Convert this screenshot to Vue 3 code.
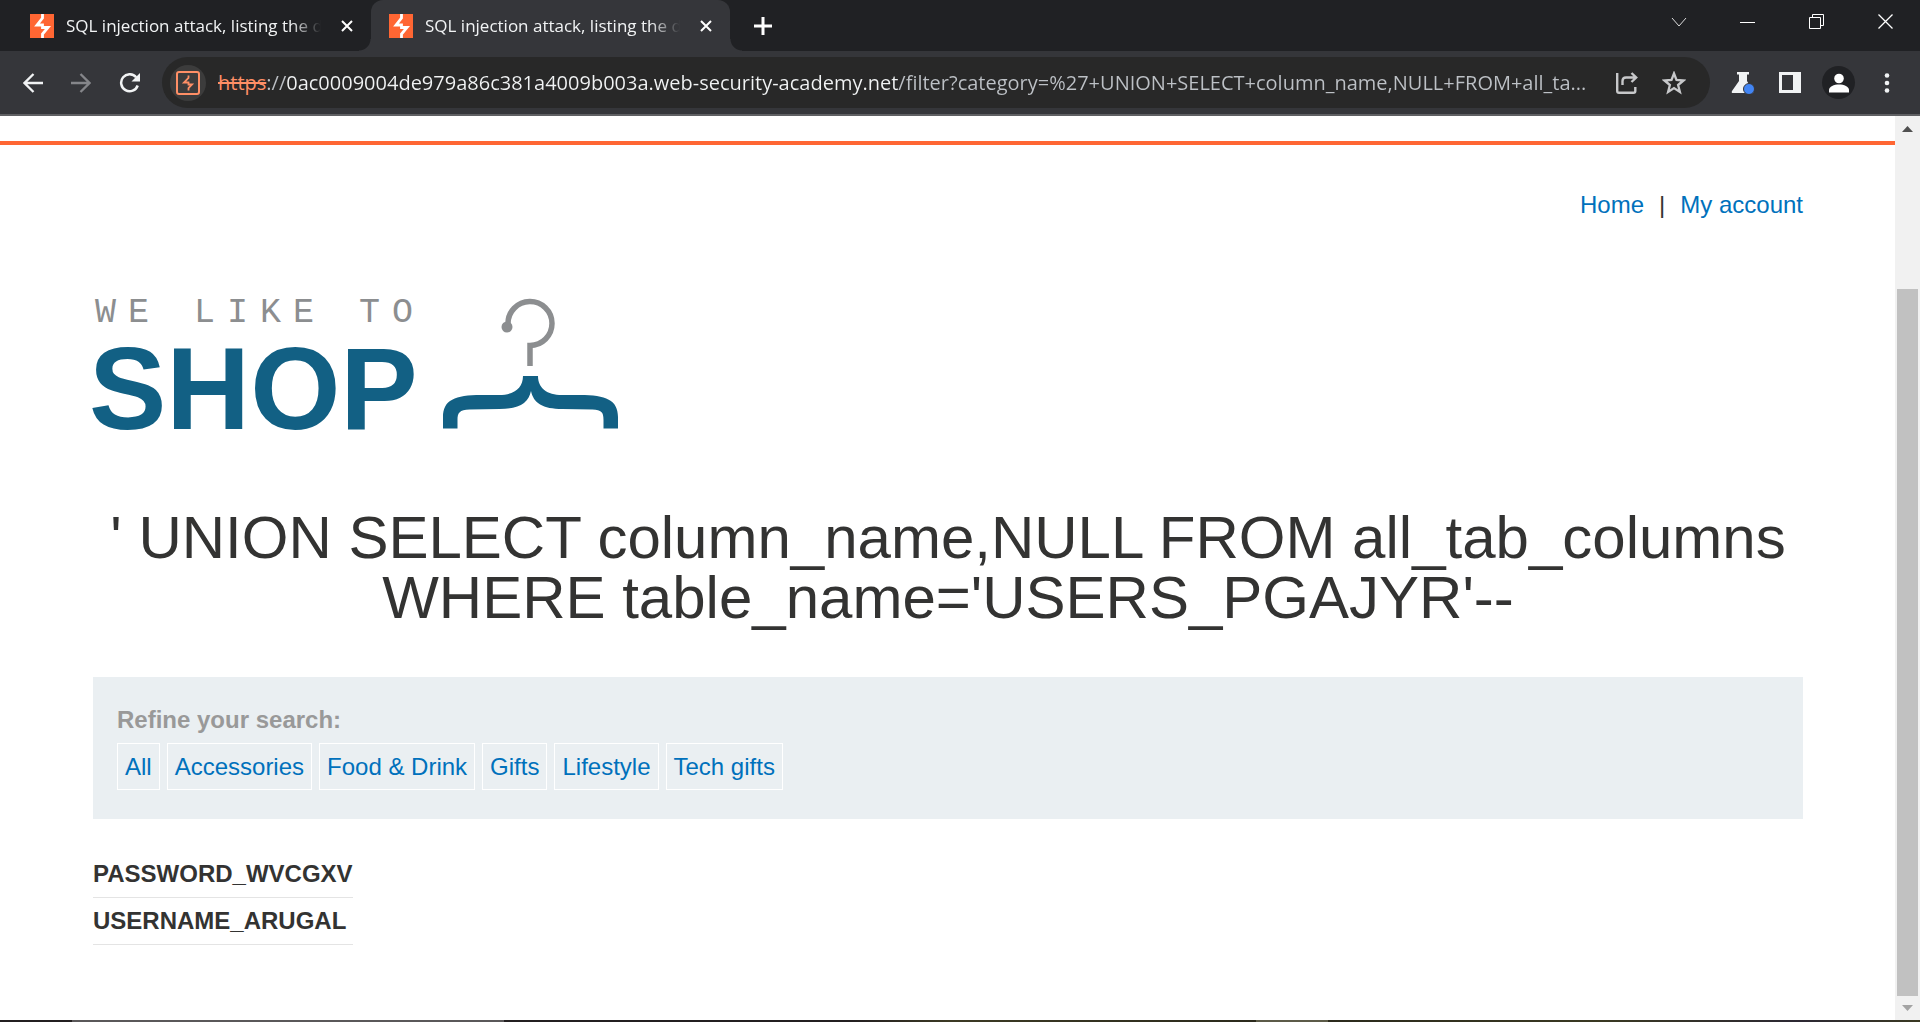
<script setup>
import { ref } from 'vue'

const tabs = [
  { title: 'SQL injection attack, listing the database contents', active: false },
  { title: 'SQL injection attack, listing the database contents', active: true },
]
const address = ref('://0ac0009004de979a86c381a4009b003a.web-security-academy.net/filter?category=%27+UNION+SELECT+column_name,NULL+FROM+all_ta...')
const heading = "' UNION SELECT column_name,NULL FROM all_tab_columns WHERE table_name='USERS_PGAJYR'--"
const filters = ['All', 'Accessories', 'Food & Drink', 'Gifts', 'Lifestyle', 'Tech gifts']
const rows = ['PASSWORD_WVCGXV', 'USERNAME_ARUGAL']
</script>

<template>
  <div class="window">
    <header class="tabstrip">
      <div v-for="(tab, i) in tabs" :key="i" class="tab" :class="{ active: tab.active }">
        <svg class="favicon" viewBox="0 0 24 24" aria-hidden="true">
          <rect width="24" height="24" fill="#ff6633" />
          <path d="M12.500 0v4L7 11h5.500v2.500H18L12.500 20v4" fill="none" stroke="#fff" stroke-width="2.800" />
        </svg>
        <span class="tab-title">{{ tab.title }}</span>
        <button class="icon-btn tab-close" aria-label="Close tab">
          <svg width="12" height="12" viewBox="0 0 12 12"><path d="M1 1l10 10M11 1L1 11" stroke="#fff" stroke-width="2" /></svg>
        </button>
      </div>
      <button class="icon-btn new-tab" aria-label="New tab">
        <svg width="18" height="18" viewBox="0 0 18 18"><path d="M9 0v18M0 9h18" stroke="#fff" stroke-width="3" /></svg>
      </button>
      <div class="window-controls">
        <button class="icon-btn" aria-label="Search tabs">
          <svg width="16" height="16" viewBox="0 0 16 16"><path d="M1 4l7 8 7-8" fill="none" stroke="#ddd" /></svg>
        </button>
        <button class="icon-btn" aria-label="Minimize">
          <svg width="16" height="16" viewBox="0 0 16 16"><path d="M0 8.500h15" stroke="#fff" /></svg>
        </button>
        <button class="icon-btn" aria-label="Restore">
          <svg width="16" height="16" viewBox="0 0 16 16"><path d="M.5 3.500h11v11H.5zM3.500 3V.5h11v11H12" fill="none" stroke="#fff" /></svg>
        </button>
        <button class="icon-btn" aria-label="Close window">
          <svg width="16" height="16" viewBox="0 0 16 16"><path d="M.5.5l14 14M14.500.5l-14 14" stroke="#fff" stroke-width="1.300" /></svg>
        </button>
      </div>
    </header>

    <div class="toolbar">
      <div class="nav-buttons">
        <button class="icon-btn" aria-label="Back">
          <svg width="20" height="20" viewBox="0 0 20 20"><path d="M20 10H2M10.500 1L1.500 10l9 9" fill="none" stroke="#f1f3f4" stroke-width="2.300" /></svg>
        </button>
        <button class="icon-btn" aria-label="Forward">
          <svg width="20" height="20" viewBox="0 0 20 20"><path d="M0 10h18M9.500 1l9 9-9 9" fill="none" stroke="#85868a" stroke-width="2.300" /></svg>
        </button>
        <button class="icon-btn" aria-label="Reload">
          <svg width="22" height="20" viewBox="0 0 22 20"><path d="M17.200 4.300A8.500 8.500 0 1 0 18.700 12.500" fill="none" stroke="#f1f3f4" stroke-width="2.500" /><path d="M21 0v8.500h-8.500z" fill="#f1f3f4" /></svg>
        </button>
      </div>

      <div class="omnibox">
        <button class="icon-btn site-info" aria-label="View site information">
          <svg width="24" height="24" viewBox="0 0 24 24">
            <rect x="1" y="1" width="22" height="22" rx="2" fill="none" stroke="#ff8f66" stroke-width="2" />
            <path d="M12.500 4.500v2.500L8 11.500h4.500v2H16l-3.500 3.500v2.500" fill="none" stroke="#ff8f66" stroke-width="1.800" />
          </svg>
        </button>
        <label class="scheme" for="address">https</label>
        <input id="address" v-model="address" class="address" type="text" spellcheck="false" />
        <button class="icon-btn" aria-label="Share">
          <svg width="22" height="22" viewBox="0 0 22 22"><path d="M1.200 1v18q0 1.800 1.800 1.800h14.500q1.800 0 1.800-1.800v-4M6.500 13V9q0-3.500 3.500-3.500h10M15.500 1l4.700 4.500L15.500 10" fill="none" stroke="#c7c8ca" stroke-width="2.400" /></svg>
        </button>
        <button class="icon-btn" aria-label="Bookmark">
          <svg width="24" height="24" viewBox="0 0 24 24"><path d="M12 2.500l2.500 6.500 7 .5-5.400 4.500 1.800 7L12 17.100 6.100 21l1.800-7L2.500 9.500l7-.5z" fill="none" stroke="#c7c8ca" stroke-width="2.300" /></svg>
        </button>
      </div>

      <div class="actions">
        <button class="icon-btn" aria-label="Labs">
          <svg width="24" height="22" viewBox="0 0 24 22"><path d="M6 0h12v2.500h-2V9l6 10q1 2-1 2H2q-2 0-1-2L8 9V2.500H6z" fill="#f1f3f4" /><circle cx="18" cy="17" r="5.500" fill="#4285f4" stroke="#35363a" /></svg>
        </button>
        <button class="icon-btn" aria-label="Side panel">
          <svg width="22" height="21" viewBox="0 0 22 21"><path fill-rule="evenodd" d="M0 0h22v21H0zM3 3v15h11V3z" fill="#f1f3f4" /></svg>
        </button>
        <button class="icon-btn avatar" aria-label="Profile">
          <svg width="20" height="20" viewBox="0 0 20 20"><circle cx="10" cy="5.500" r="4.800" fill="#fff" /><path d="M0 19.500V17c0-3.500 5-5.500 10-5.500s10 2 10 5.500v2.500z" fill="#fff" /></svg>
        </button>
        <button class="icon-btn" aria-label="Menu">
          <svg width="6" height="20" viewBox="0 0 6 20"><g fill="#f1f3f4"><circle cx="3" cy="2.500" r="2.300" /><circle cx="3" cy="10" r="2.300" /><circle cx="3" cy="17.500" r="2.300" /></g></svg>
        </button>
      </div>
    </div>

    <div class="viewport">
      <main class="page">
        <div class="container">
          <nav class="top-links">
            <a href="#home">Home</a>
            <span>|</span>
            <a href="#account">My account</a>
          </nav>

          <svg class="logo" viewBox="93 292 526 140" role="img" aria-label="We like to shop">
            <text class="tagline" x="95" y="322">WE LIKE TO</text>
            <text class="brand" x="89" y="429">SHOP</text>
            <path d="M508 327v-3a22 22 0 1 1 22 21.500V366" fill="none" stroke="#8c8e90" stroke-width="5.500" />
            <circle cx="507" cy="327" r="5.500" fill="#8c8e90" />
            <path d="M523 376h15c0 12 9 19 24 19h18c26 0 38 5 38 22v11.500h-14.500V420c0-8-2-10-11-10.500l-30-.500c-20 0-29-6-31.500-18-2.500 12-11.500 18-31.500 18l-30 .5c-10 .5-12 3-12 10.500v8.500H443V417c0-17 12-22 38-22h18c15 0 24-7 24-19z" fill="#126084" />
          </svg>

          <h1>{{ heading }}</h1>

          <section class="filters">
            <h2>Refine your search:</h2>
            <div class="filter-list">
              <a v-for="f in filters" :key="f" href="#filter">{{ f }}</a>
            </div>
          </section>

          <table class="results">
            <tbody>
              <tr v-for="r in rows" :key="r"><th scope="row">{{ r }}</th></tr>
            </tbody>
          </table>
        </div>
      </main>
      <div class="scrollbar" aria-hidden="true">
        <svg width="25" height="25" viewBox="0 0 25 25"><path d="M7 16l5.500-6 5.500 6z" fill="#505050" /></svg>
        <div class="track-space"></div>
        <div class="thumb"></div>
        <svg width="25" height="24" viewBox="0 0 25 24"><path d="M7 9l5.500 6L18 9z" fill="#a3a3a3" /></svg>
      </div>
    </div>
    <div class="taskbar"></div>
  </div>
</template>

<style>
body {
  margin: 0;
}
</style>

<style scoped>
.window {
  display: flex;
  flex-direction: column;
  min-height: 100vh;
  background: #fff;
  font-family: "Liberation Sans", Arial, sans-serif;
}
.icon-btn {
  display: flex;
  align-items: center;
  justify-content: center;
  flex: none;
  padding: 0;
  border: 0;
  background: none;
}
.tabstrip {
  display: flex;
  align-items: stretch;
  height: 51px;
  padding-left: 12px;
  background: #202124;
}
.tab {
  position: relative;
  display: flex;
  align-items: center;
  box-sizing: border-box;
  width: 359px;
  padding: 0 18px;
  border-radius: 12px 12px 0 0;
}
.tab.active {
  background: #35363a;
}
.tab.active::before,
.tab.active::after {
  content: "";
  position: absolute;
  bottom: 0;
  width: 12px;
  height: 12px;
}
.tab.active::before {
  right: 100%;
  background: radial-gradient(circle at 0 0, transparent 11px, #35363a 12px);
}
.tab.active::after {
  left: 100%;
  background: radial-gradient(circle at 100% 0, transparent 11px, #35363a 12px);
}
.favicon {
  flex: none;
  width: 24px;
  height: 24px;
}
.tab-title {
  flex: 1;
  margin-left: 12px;
  overflow: hidden;
  white-space: nowrap;
  font: 17px/24px "Open Sans", "Noto Sans", sans-serif;
  color: #f1f3f4;
  mask-image: linear-gradient(to right, #000 calc(100% - 30px), transparent);
}
.tab-close {
  width: 12px;
  margin-left: 20px;
}
.new-tab {
  width: 36px;
  margin-left: 15px;
}
.window-controls {
  display: flex;
  gap: 53px;
  height: 43px;
  margin-left: auto;
  padding-right: 26px;
}
.toolbar {
  display: flex;
  align-items: center;
  height: 63px;
  background: #35363a;
  border-bottom: 2px solid #5f6063;
}
.nav-buttons {
  display: flex;
  gap: 28px;
  padding: 0 21px 0 23px;
}
.omnibox {
  display: flex;
  align-items: center;
  flex: 1;
  min-width: 0;
  gap: 24px;
  height: 51px;
  box-sizing: border-box;
  padding: 0 24px 0 8px;
  border-radius: 26px;
  background: #282828;
}
.site-info {
  width: 36px;
  height: 36px;
  margin-right: -12px;
  border-radius: 50%;
  background: #3c3c3c;
}
.scheme,
.address {
  font: 20px/30px "Open Sans", "Noto Sans", sans-serif;
}
.scheme {
  margin-right: -24px;
  color: #ff8f66;
  text-decoration: line-through;
}
.address {
  flex: 1;
  min-width: 0;
  margin-right: -8px;
  padding: 0;
  border: 0;
  outline: 0;
  color: transparent;
  background: linear-gradient(to right, #bdc1c6 20px, #f1f3f4 20px, #f1f3f4 632px, #bdc1c6 632px);
  background-clip: text;
}
.actions {
  display: flex;
  align-items: center;
  gap: 24px;
  padding: 0 30px 0 21px;
}
.avatar {
  width: 33px;
  height: 33px;
  margin: 0 5px 0 -3px;
  border-radius: 50%;
  background: #202124;
}
.viewport {
  display: flex;
  flex: 1;
}
.page {
  flex: 1;
  margin-top: 25px;
  border-top: 4px solid #ff6633;
}
.container {
  padding: 42px 92px 74px 93px;
  color: #333332;
}
.top-links {
  display: flex;
  justify-content: flex-end;
  gap: 15px;
  font-size: 24px;
  line-height: 36px;
}
a {
  color: #0071bc;
  text-decoration: none;
}
.logo {
  display: block;
  width: 526px;
  height: 140px;
  margin-top: 69px;
  overflow: visible;
}
.tagline {
  font: 35px "Liberation Mono", monospace;
  letter-spacing: 12px;
  fill: #8c8e90;
}
.brand {
  font: bold 116px "Liberation Sans", Arial, sans-serif;
  fill: #126084;
}
h1 {
  margin: 76px 0 49px;
  font-size: 60px;
  font-weight: 400;
  line-height: 60px;
  text-align: center;
}
.filters {
  padding: 25px 24px 29px;
  background: #eaeff2;
}
h2 {
  margin: 0 0 5px;
  font-size: 24px;
  line-height: 36px;
  color: #999;
}
.filter-list {
  display: flex;
  flex-wrap: wrap;
  gap: 7px;
}
.filter-list a {
  padding: 0 7px;
  border: 1px solid #fff;
  font-size: 24px;
  line-height: 45px;
}
.results {
  margin-top: 32px;
  border-collapse: collapse;
}
.results th {
  padding: 5px 0;
  border-bottom: 1px solid #e4e4e4;
  font-size: 24px;
  line-height: 36px;
  text-align: left;
}
.scrollbar {
  display: flex;
  flex-direction: column;
  width: 25px;
  background: #f1f1f1;
}
.scrollbar svg {
  flex: none;
}
.track-space {
  flex: 148;
}
.thumb {
  flex: 707;
  margin: 0 2px;
  background: #c1c1c1;
}
.taskbar {
  height: 2px;
  background: linear-gradient(to right, #231f20 72px, #5a5859 72px, #5a5859 504px, #231f20 504px, #231f20 850px, #3c3a24 950px, #2b2a1c 1256px, #5c5b48 1256px, #5c5b48 1328px, #2b2a1c 1328px, #3a3922 1600px, #2c2833 1800px, #3a3922);
}
</style>
